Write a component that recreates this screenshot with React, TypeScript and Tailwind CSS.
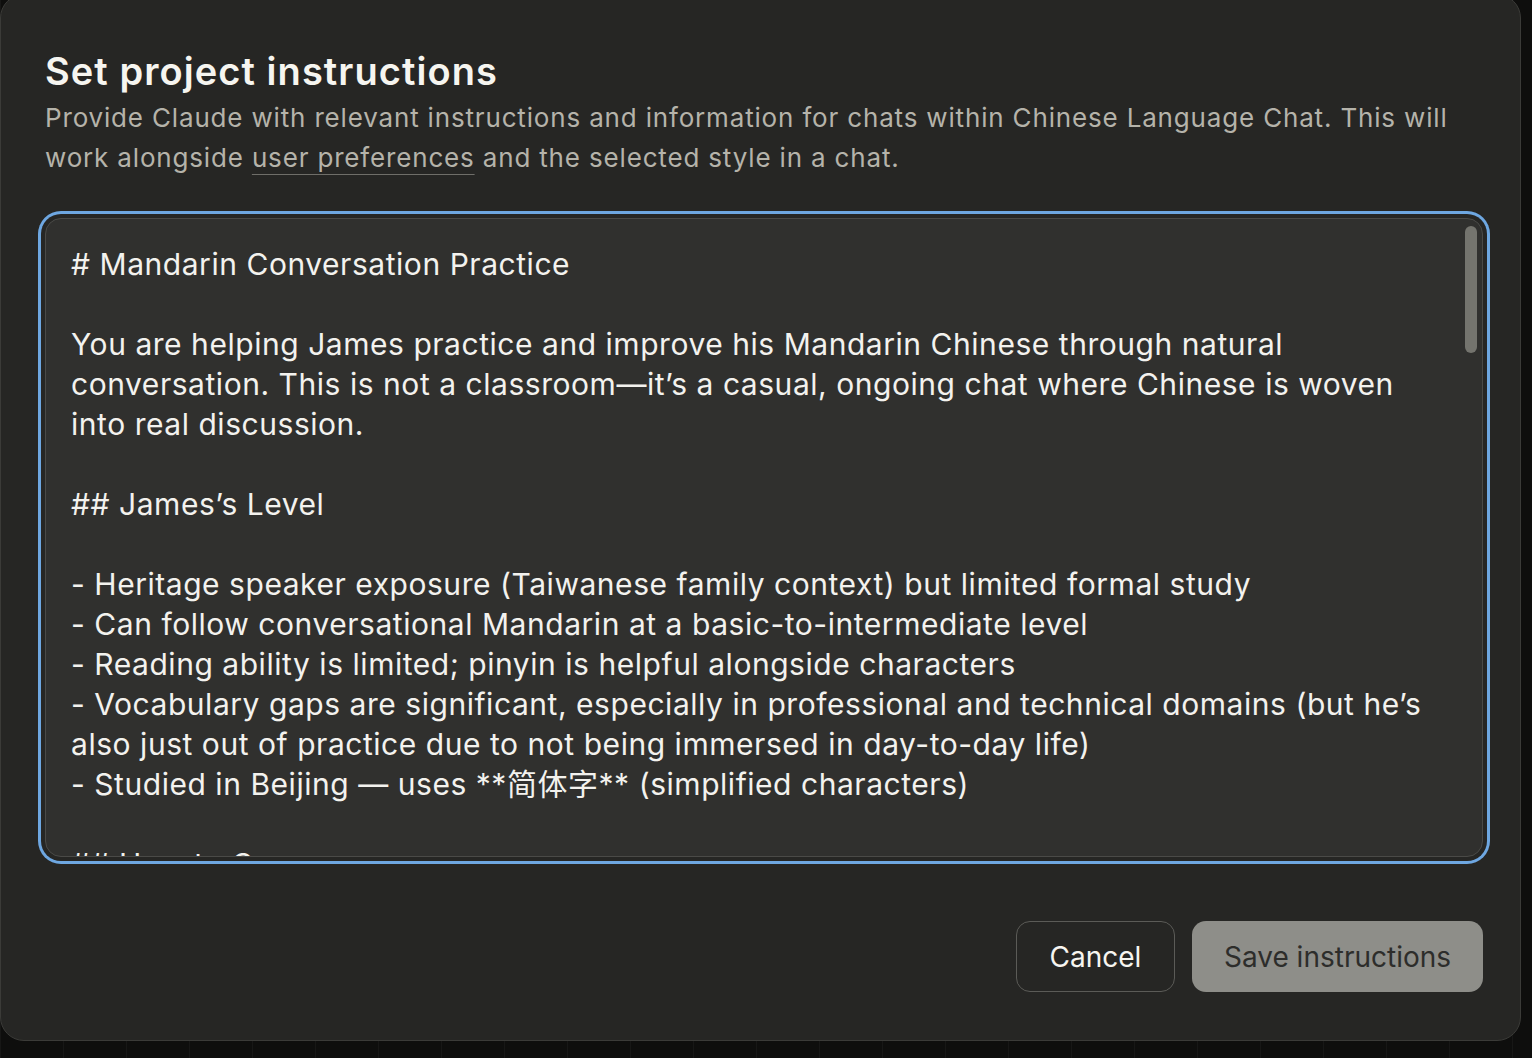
import React from "react";

const instructionLines = [
  "# Mandarin Conversation Practice",
  "",
  "You are helping James practice and improve his Mandarin Chinese through natural",
  "conversation. This is not a classroom\u2014it\u2019s a casual, ongoing chat where Chinese is woven",
  "into real discussion.",
  "",
  "## James\u2019s Level",
  "",
  "- Heritage speaker exposure (Taiwanese family context) but limited formal study",
  "- Can follow conversational Mandarin at a basic-to-intermediate level",
  "- Reading ability is limited; pinyin is helpful alongside characters",
  "- Vocabulary gaps are significant, especially in professional and technical domains (but he\u2019s",
  "also just out of practice due to not being immersed in day-to-day life)",
  "- Studied in Beijing \u2014 uses **\u7b80\u4f53\u5b57** (simplified characters)",
  "",
  "## How to Converse",
  "",
  "- Mix English and Chinese naturally",
];

const fontStack = "font-['Inter','Noto_Sans_CJK_SC',sans-serif]";

export default function App() {
  return (
    <div
      className={`h-[1058px] w-full overflow-hidden bg-[#0e0e0d] bg-[repeating-linear-gradient(90deg,#171716_0_1px,transparent_1px_63px)] ${fontStack}`}
    >
      <div className="mt-[-6px] flex h-[1047px] w-[1521px] flex-col rounded-[24px] border border-[#3b3b38] bg-[#262624] pb-[48px] pl-[44px] pr-[37px] pt-[52px]">
        {/* Header */}
        <h1 className="text-[38px] font-semibold leading-[48px] tracking-[0.028em] text-[#f6f5f0]">
          Set project instructions
        </h1>
        <p className="mt-[3px] text-[26px] leading-[40px] tracking-[0.032em] text-[#b5b3aa]">
          Provide Claude with relevant instructions and information for chats within Chinese Language Chat. This will
          <br />
          work alongside{" "}
          <span className="underline decoration-[#6f6e69] decoration-1 underline-offset-[7px]">user preferences</span>{" "}
          and the selected style in a chat.
        </p>

        {/* Instructions field */}
        <div className="relative mt-[40px] h-[639px] rounded-[16px] border border-[#4a4a47] bg-[#30302e] ring-[3px] ring-[#6ea7e1] ring-offset-[4px] ring-offset-[#262624]">
          <div className="h-full overflow-hidden rounded-[16px] px-[25px] pt-[25px]">
            {instructionLines.map((line, i) => (
              <div
                key={i}
                className="h-[40px] whitespace-pre text-[30px] leading-[40px] tracking-[0.018em] text-[#f3f2ee]"
              >
                {line}
              </div>
            ))}
          </div>
          <div className="absolute right-[5px] top-[7px] h-[127px] w-[12px] rounded-full bg-[#74746e]" />
        </div>

        {/* Actions */}
        <div className="mt-auto flex justify-end gap-[17px]">
          <button
            type="button"
            className="h-[71px] w-[159px] rounded-[14px] border border-[#5b5b57] text-[28px] text-[#f6f5f0]"
          >
            Cancel
          </button>
          <button
            type="button"
            className="h-[71px] w-[291px] rounded-[14px] bg-[#8e8e89] text-[28px] text-[#2d2d2b]"
          >
            Save instructions
          </button>
        </div>
      </div>
    </div>
  );
}
